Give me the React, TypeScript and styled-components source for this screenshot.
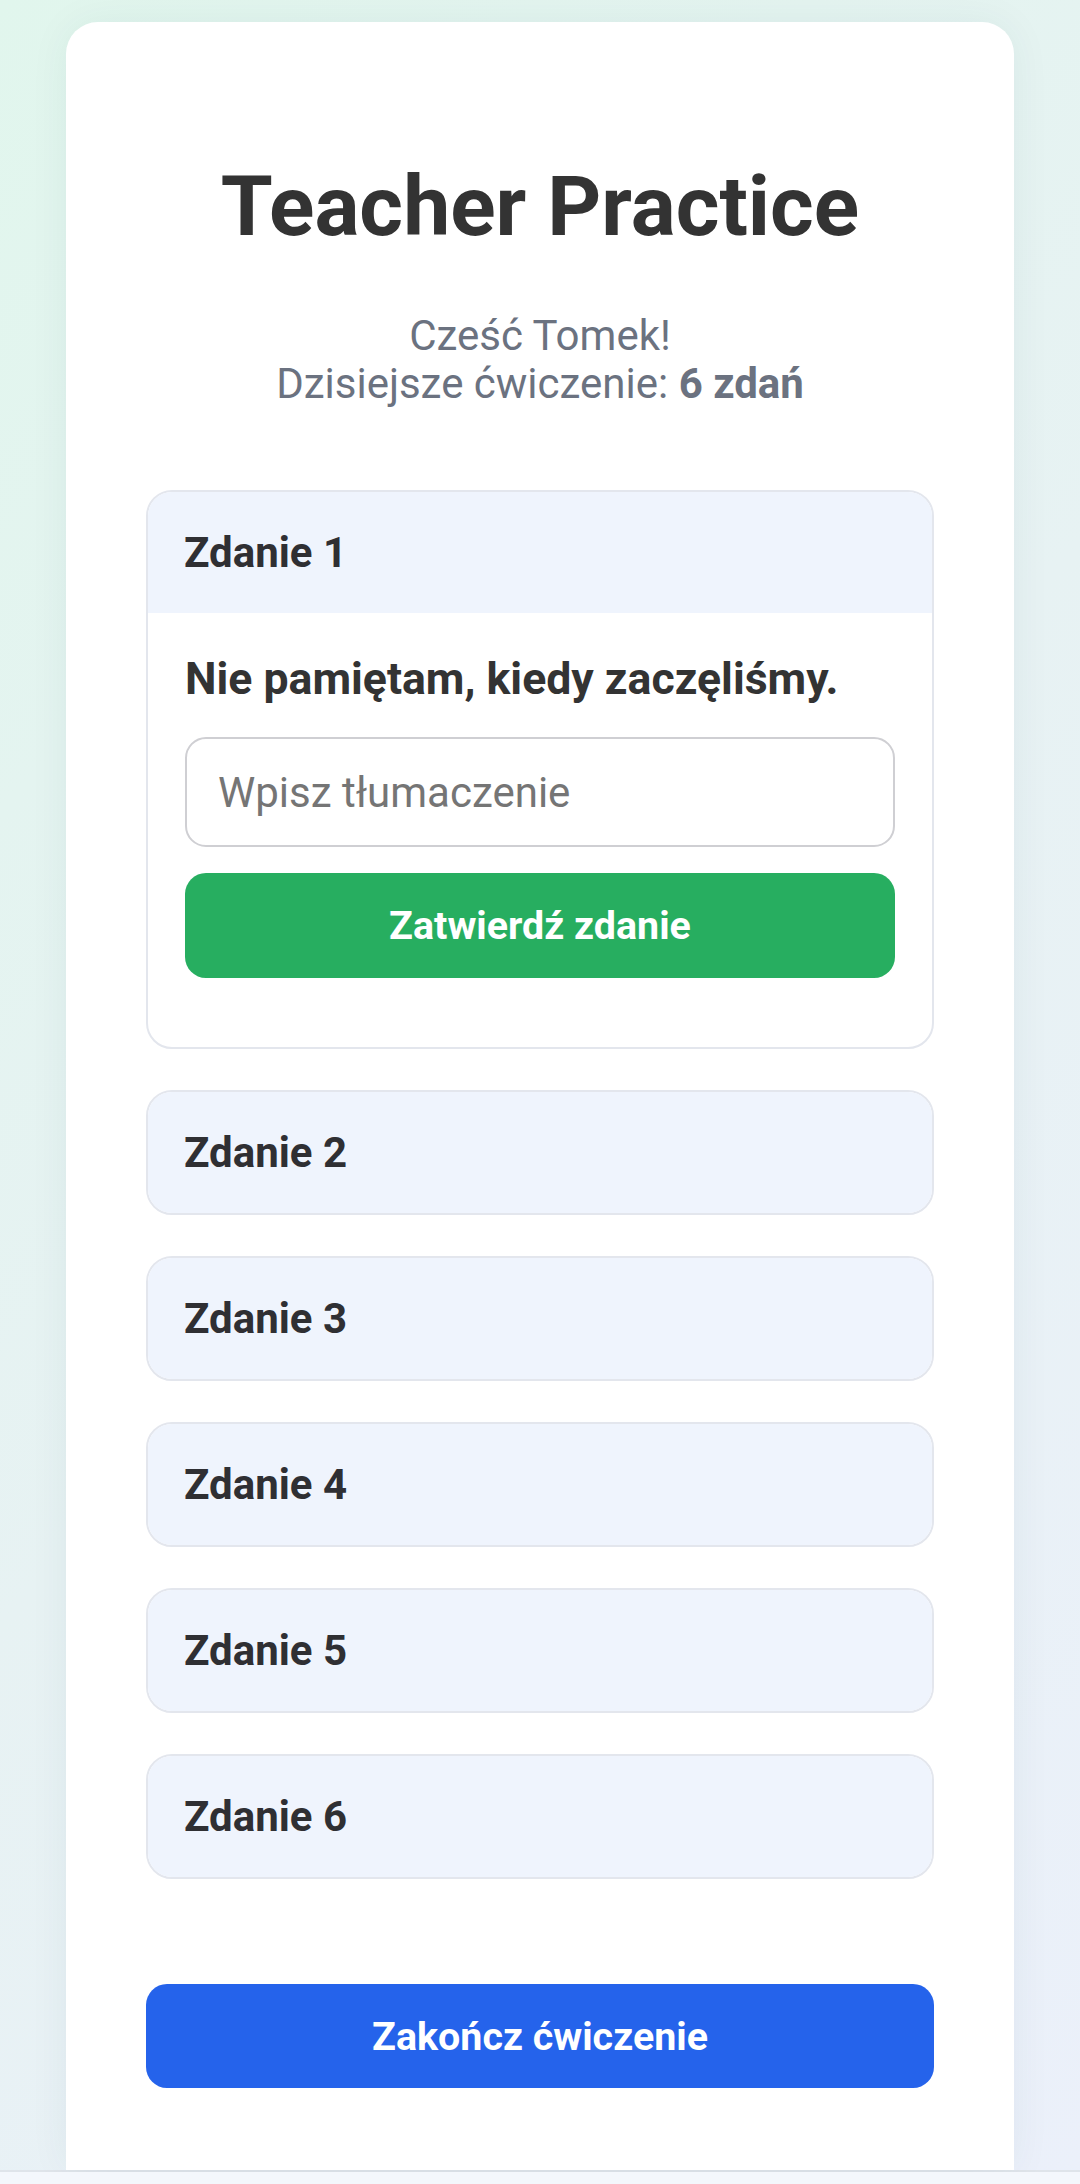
import styled, { createGlobalStyle } from "styled-components";

const GlobalStyle = createGlobalStyle`
  html {
    background: #f4f7fc;
  }
  body {
    margin: 0;
    font-family: Roboto, "Noto Sans", "Liberation Sans", sans-serif;
    color: #333333;
  }
`;

const sentences = [
  "Nie pamiętam, kiedy zaczęliśmy.",
  "",
  "",
  "",
  "",
  "",
];

function App() {
  return (
    <>
      <GlobalStyle />
      <Page>
        <Card>
          <Title>Teacher Practice</Title>
          <Greeting>
            Cześć Tomek!
            <br />
            Dzisiejsze ćwiczenie: <strong>6 zdań</strong>
          </Greeting>
          <List>
            {sentences.map((text, i) => (
              <Item key={i}>
                <ItemHeader>Zdanie {i + 1}</ItemHeader>
                {i === 0 && (
                  <ItemBody>
                    <Sentence>{text}</Sentence>
                    <Answer placeholder="Wpisz tłumaczenie" />
                    <SubmitButton>Zatwierdź zdanie</SubmitButton>
                  </ItemBody>
                )}
              </Item>
            ))}
          </List>
          <FinishButton>Zakończ ćwiczenie</FinishButton>
        </Card>
      </Page>
    </>
  );
}

const Page = styled.main`
  padding: 22px 66px 0;
  background: linear-gradient(135deg, #e1f6ed 0%, #e7f2f3 50%, #ebf0fa 100%);
  border-bottom: 2px solid #dfe4ea;
`;

const Card = styled.section`
  background: #ffffff;
  border-radius: 32px 32px 0 0;
  box-shadow: 0 0 40px rgba(40, 70, 90, 0.06);
  padding: 135px 80px 82px;
  display: flex;
  flex-direction: column;
`;

const Title = styled.h1`
  margin: 0;
  font-size: 84px;
  font-weight: 700;
  line-height: normal;
  text-align: center;
  color: #333333;
`;

const Greeting = styled.p`
  margin: 56px 0 0;
  font-size: 42px;
  line-height: 48px;
  text-align: center;
  color: #6b7280;

  strong {
    font-weight: 700;
  }
`;

const List = styled.div`
  margin-top: 82px;
  display: flex;
  flex-direction: column;
  gap: 41px;
`;

const Item = styled.div`
  border: 2px solid #e3e6ed;
  border-radius: 26px;
  overflow: hidden;
  background: #ffffff;
`;

const ItemHeader = styled.div`
  padding: 36px 36px;
  height: 49px;
  line-height: 49px;
  font-size: 42px;
  font-weight: 700;
  color: #2f2f33;
  background: #eff4fd;
`;

const ItemBody = styled.div`
  padding: 40px 37px 69px;
  display: flex;
  flex-direction: column;
`;

const Sentence = styled.p`
  margin: 0;
  font-size: 44.6px;
  font-weight: 700;
  line-height: normal;
  color: #333333;
`;

const Answer = styled.input`
  margin-top: 32px;
  box-sizing: border-box;
  height: 110px;
  width: 100%;
  padding: 0 31px;
  border: 2px solid #cfcfd3;
  border-radius: 21px;
  font-family: inherit;
  font-size: 42px;
  color: #333333;
  outline: none;

  &::placeholder {
    color: #757575;
  }
`;

const SubmitButton = styled.button`
  margin-top: 26px;
  height: 105px;
  border: none;
  border-radius: 21px;
  background: #27ae60;
  color: #ffffff;
  font-family: inherit;
  font-size: 39.4px;
  font-weight: 700;
  cursor: pointer;
`;

const FinishButton = styled.button`
  margin-top: 105px;
  height: 104px;
  border: none;
  border-radius: 21px;
  background: #2563eb;
  color: #ffffff;
  font-family: inherit;
  font-size: 39.4px;
  font-weight: 700;
  cursor: pointer;
`;

export default App;
